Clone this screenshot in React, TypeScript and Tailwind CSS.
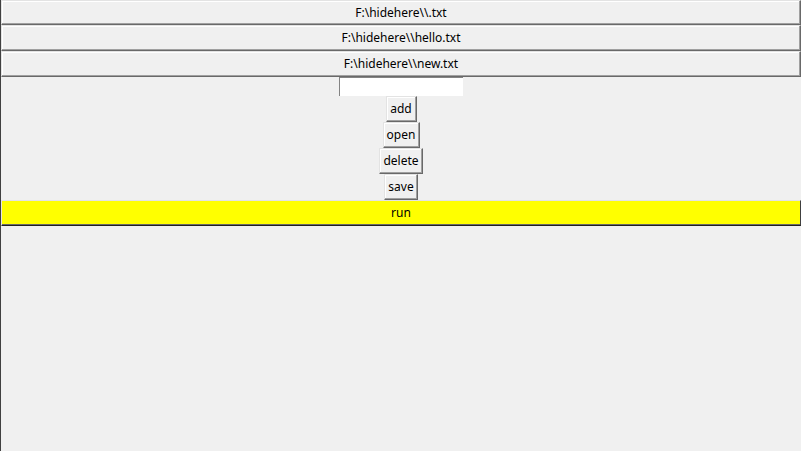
import React from "react";

const raised =
  "border border-t-[#e3e3e3] border-l-[#e3e3e3] border-r-[#696969] border-b-[#696969] shadow-[inset_-1px_-1px_0_#a0a0a0,inset_1px_1px_0_#ffffff] bg-[#f0f0f0] text-black flex items-center justify-center";

export default function App() {
  const files = ["F:\\hidehere\\\\.txt", "F:\\hidehere\\\\hello.txt", "F:\\hidehere\\\\new.txt"];
  return (
    <div
      className="w-[801px] h-[451px] bg-[#f0f0f0] border-l border-l-[#404040] flex flex-col items-center overflow-hidden text-[12px] leading-none"
      style={{ fontFamily: '"Noto Sans", "Open Sans", sans-serif' }}
    >
      {files.map((f, i) => (
        <div key={f} className={`${raised} w-full ${i === 0 ? "h-[25px]" : "h-[26px]"}`}>
          {f}
        </div>
      ))}
      <div className="w-[124px] h-[19px] bg-white border-t border-l border-t-[#838383] border-l-[#838383]" />
      <div className={`${raised} w-[31px] h-[26px]`}>add</div>
      <div className={`${raised} w-[37px] h-[26px]`}>open</div>
      <div className={`${raised} w-[44px] h-[26px]`}>delete</div>
      <div className={`${raised} w-[34px] h-[26px]`}>save</div>
      <div className="w-full h-[26px] bg-[#ffff00] border border-t-[#e3e3e3] border-l-[#e3e3e3] border-r-[#404040] border-b-[#202020] shadow-[inset_0_-1px_0_#696969] flex items-center justify-center text-black">
        run
      </div>
    </div>
  );
}
